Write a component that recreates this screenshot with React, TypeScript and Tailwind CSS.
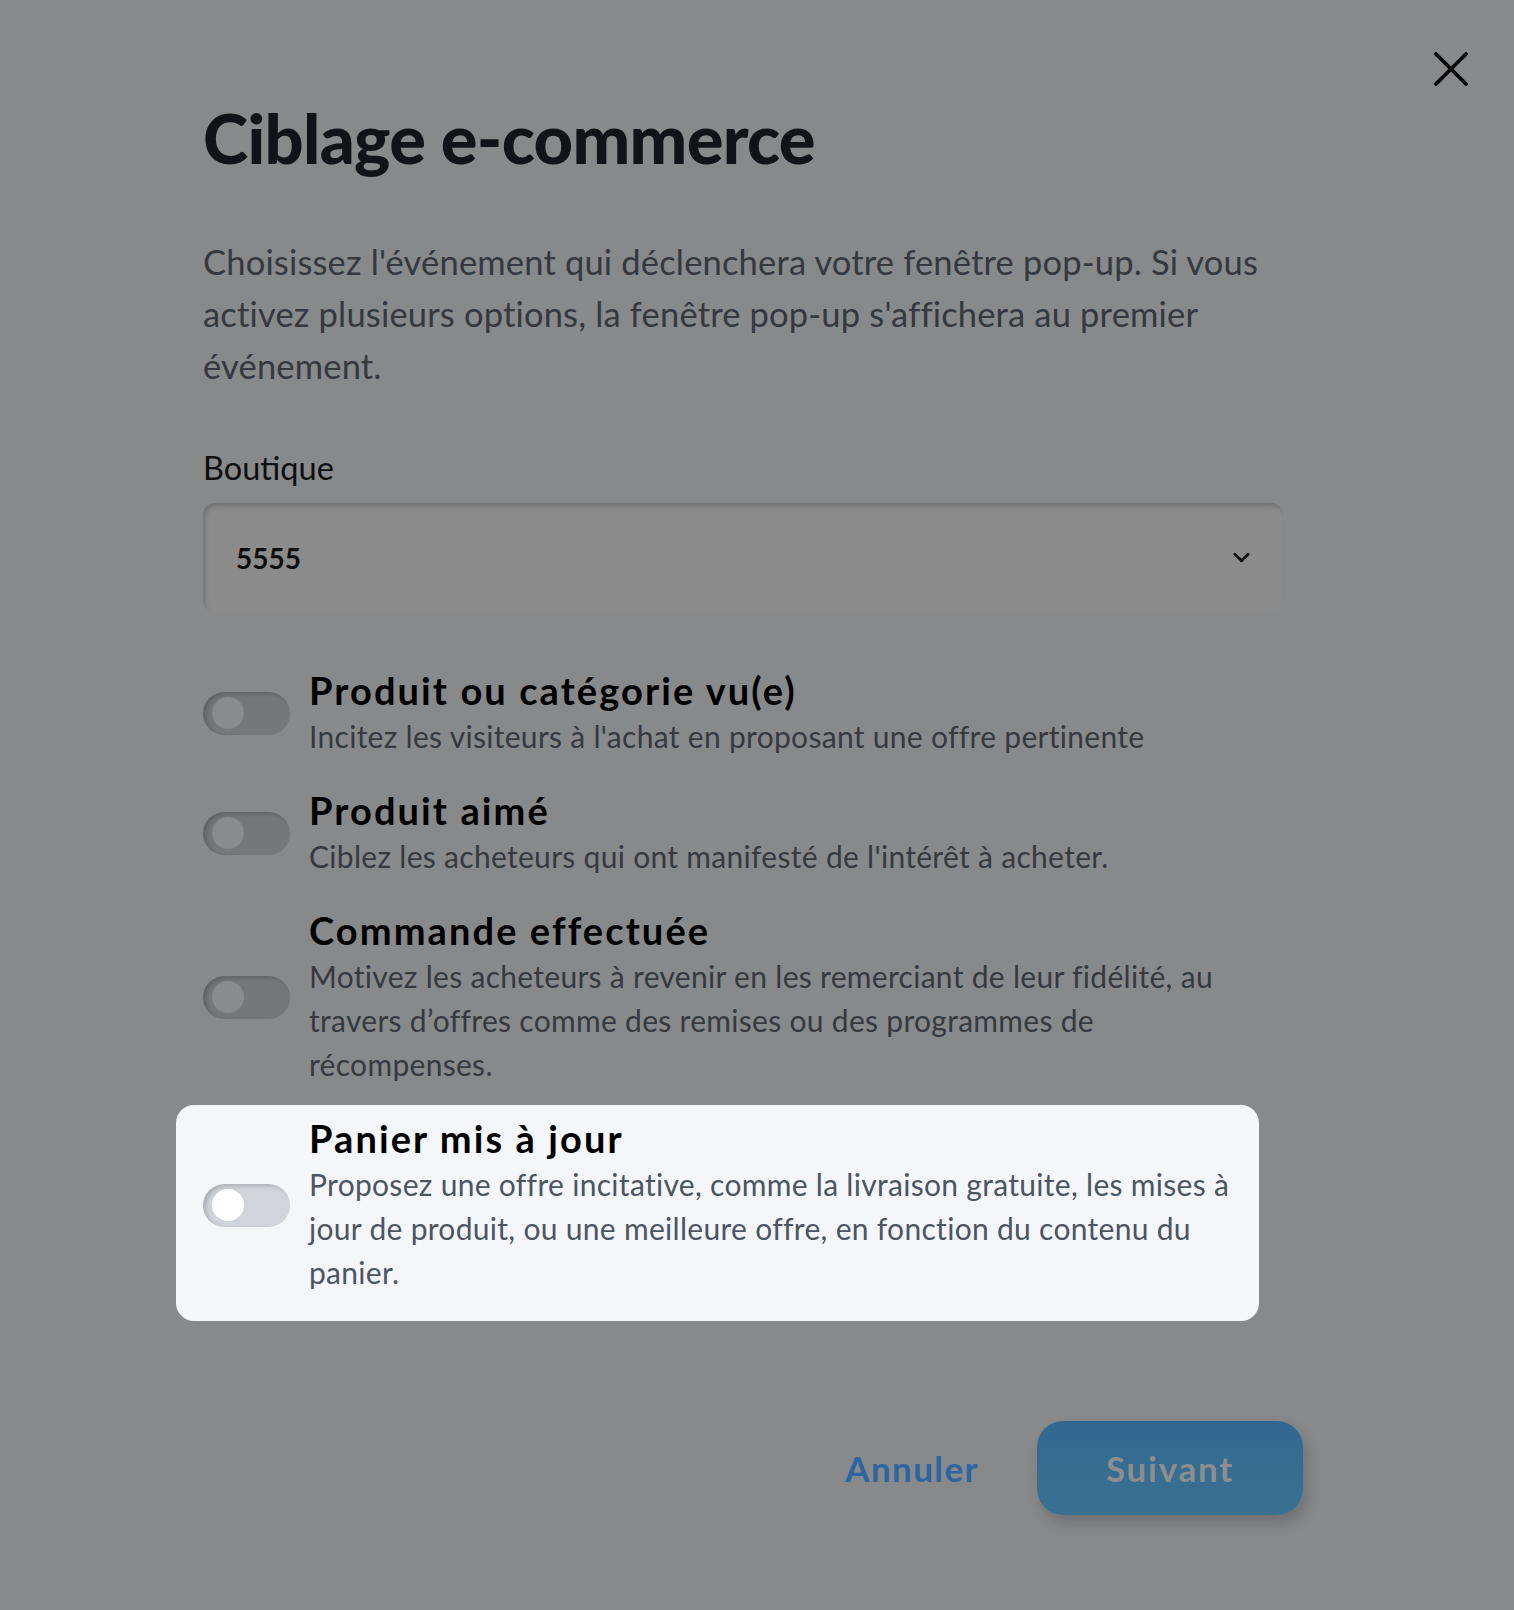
import React, { useState } from 'react';

type Trigger = {
  id: string;
  title: string;
  description: string;
};

const triggers: Trigger[] = [
  {
    id: 'viewed',
    title: 'Produit ou catégorie vu(e)',
    description: "Incitez les visiteurs à l'achat en proposant une offre pertinente",
  },
  {
    id: 'liked',
    title: 'Produit aimé',
    description: "Ciblez les acheteurs qui ont manifesté de l'intérêt à acheter.",
  },
  {
    id: 'ordered',
    title: 'Commande effectuée',
    description:
      'Motivez les acheteurs à revenir en les remerciant de leur fidélité, au travers d’offres comme des remises ou des programmes de récompenses.',
  },
  {
    id: 'cart',
    title: 'Panier mis à jour',
    description:
      'Proposez une offre incitative, comme la livraison gratuite, les mises à jour de produit, ou une meilleure offre, en fonction du contenu du panier.',
  },
];

const Toggle: React.FC<{ on: boolean; lit: boolean; onClick: () => void }> = ({ on, lit, onClick }) => (
  <button
    onClick={onClick}
    className={`shrink-0 w-[87px] h-[43px] rounded-full flex items-center px-[9px] shadow-[inset_3px_2px_4px_rgba(0,0,0,0.18)] ${
      lit ? 'bg-[#d1d5db]' : 'bg-[#76777a]'
    } ${on ? 'justify-end' : 'justify-start'}`}
  >
    <span className={`block w-[32px] h-[32px] rounded-full ${lit ? 'bg-white' : 'bg-[#8b8c8d]'}`}></span>
  </button>
);

const App: React.FC = () => {
  const [enabled, setEnabled] = useState<Record<string, boolean>>({});
  const highlighted = 'cart';

  return (
    <div
      className="relative min-h-[1610px] bg-[#88898b]"
      style={{ fontFamily: 'Lato, "Noto Sans", sans-serif' }}
    >
      {/* Close */}
      <button className="absolute left-[1434px] top-[52px] w-[34px] h-[34px]">
        <svg viewBox="0 0 34 34" className="w-full h-full" fill="none" stroke="#050505" strokeWidth="3.8" strokeLinecap="round">
          <line x1="2" y1="2" x2="32" y2="32" />
          <line x1="32" y1="2" x2="2" y2="32" />
        </svg>
      </button>

      <div className="pl-[203px] pt-[97px] w-[1303px]">
        <h1 className="text-[68.5px] leading-[82px] font-black text-[#111318] tracking-[-0.01em]">
          Ciblage e-commerce
        </h1>

        <p className="mt-[57px] w-[1080px] text-[34.5px] leading-[52px] text-[#35383e] tracking-[0.005em]">
          Choisissez l'événement qui déclenchera votre fenêtre pop-up. Si vous activez plusieurs options, la
          fenêtre pop-up s'affichera au premier événement.
        </p>

        <label className="block mt-[56px] text-[32.5px] leading-[40px] text-[#0d0e10]">Boutique</label>

        <div className="mt-[15px] w-[1080px] h-[109px] rounded-[12px] bg-[#8b8b8b] shadow-[inset_2px_3px_4px_rgba(0,0,0,0.18)] flex items-center justify-between pl-[33px] pr-[33px]">
          <span className="text-[28px] font-bold text-[#0d0d0d]">5555</span>
          <svg viewBox="0 0 18 11" className="w-[17px] h-[11px]" fill="none" stroke="#111" strokeWidth="3" strokeLinecap="round" strokeLinejoin="round">
            <polyline points="2,2 9,9 16,2" />
          </svg>
        </div>

        <ul className="mt-[40px] -ml-[27px] w-[1083px]">
          {triggers.map((t) => {
            const lit = t.id === highlighted;
            return (
              <li
                key={t.id}
                className={`flex items-center gap-[19px] px-[27px] rounded-[18px] ${
                  lit ? 'bg-[#f5f6fa] mt-[5px] pt-[11px] pb-[27px]' : 'pt-[16px] pb-[14px]'
                }`}
              >
                <Toggle
                  on={!!enabled[t.id]}
                  lit={lit}
                  onClick={() => setEnabled((s) => ({ ...s, [t.id]: !s[t.id] }))}
                />
                <div className="flex-1">
                  <div className="text-[38px] leading-[44px] font-bold text-black tracking-[0.055em]">{t.title}</div>
                  <div
                    className={`mt-[2px] text-[30px] leading-[44px] tracking-[0.01em] ${lit ? 'text-[#4b5563]' : 'text-[#36393f]'}`}
                  >
                    {t.description}
                  </div>
                </div>
              </li>
            );
          })}
        </ul>

        <div className="mt-[100px] flex items-center justify-end gap-[58px]">
          <button className="text-[35px] font-bold text-[#2d65a0] tracking-[0.04em]">Annuler</button>
          <button className="w-[266px] h-[94px] rounded-[26px] bg-gradient-to-b from-[#326890] to-[#3a7192] text-[35px] font-bold text-[#8c8d8e] tracking-[0.05em] shadow-[4px_8px_14px_rgba(0,0,0,0.18)]">
            Suivant
          </button>
        </div>
      </div>
    </div>
  );
};

export default App;
